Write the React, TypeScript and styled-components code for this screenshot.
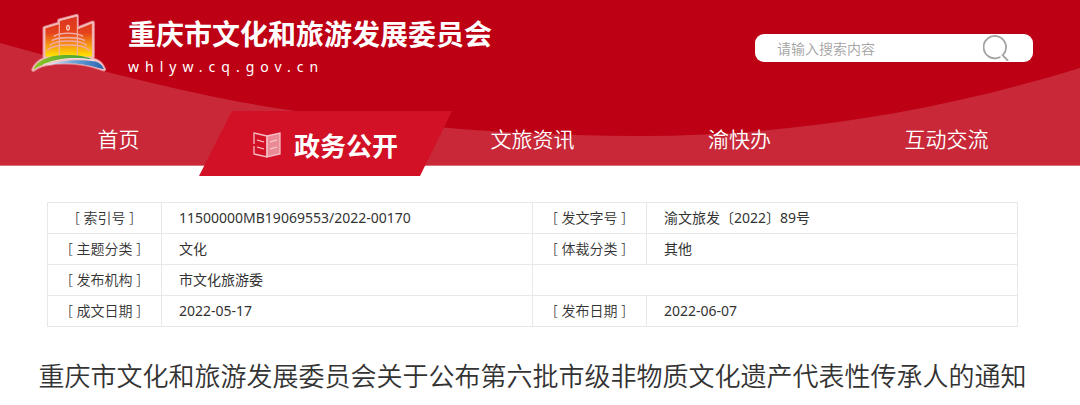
import React from "react";
import styled, { createGlobalStyle } from "styled-components";

const GlobalStyle = createGlobalStyle`
  *, *::before, *::after { box-sizing: border-box; }
  body {
    margin: 0;
    background: #fff;
    color: #333;
    font-family: "Noto Sans", "Noto Sans CJK SC", sans-serif;
    font-size: 14px;
  }
`;

const Header = styled.header`
  position: relative;
  background: #bd0014;
  border-bottom: 1px solid #d8707c;
`;

const Wave = styled.svg`
  position: absolute;
  inset: 0;
  width: 100%;
  height: 100%;
`;

const TopBar = styled.div`
  position: relative;
  display: flex;
  justify-content: space-between;
  align-items: flex-start;
  height: 111px;
  padding: 12px 47px 0 28px;
`;

const Brand = styled.a`
  display: flex;
  gap: 20px;
  color: #fff;
  text-decoration: none;
`;

const BrandText = styled.div`
  display: flex;
  flex-direction: column;
  gap: 5px;
  padding-top: 4px;
`;

const SiteName = styled.span`
  font-size: 28px;
  font-weight: 700;
  line-height: 36px;
  white-space: nowrap;
`;

const SiteHost = styled.span`
  font-size: 14px;
  line-height: 20px;
  letter-spacing: 6px;
`;

const Search = styled.form`
  display: flex;
  align-items: center;
  width: 278px;
  height: 28px;
  margin-top: 22px;
  padding: 0 24px 0 22px;
  border-radius: 9px;
  background: #fff;
`;

const SearchInput = styled.input`
  flex: 1;
  min-width: 0;
  padding: 0;
  border: 0;
  outline: 0;
  background: none;
  color: #333;
  font: inherit;
  font-weight: 350;
  &::placeholder { color: #a3a3a3; opacity: 1; }
`;

const SearchButton = styled.button`
  display: flex;
  padding: 0;
  border: 0;
  background: none;
  cursor: pointer;
`;

const Nav = styled.nav`
  position: relative;
  display: grid;
  grid-template-columns: repeat(5, minmax(0, 1fr));
  height: 54px;
  padding: 0 30px 0 15px;
`;

const NavLink = styled.a<{ $active?: boolean }>`
  display: flex;
  align-items: center;
  justify-content: center;
  gap: 13px;
  color: #fff;
  text-decoration: none;
  white-space: nowrap;
  font-size: ${(p) => (p.$active ? 26 : 21)}px;
  font-weight: ${(p) => (p.$active ? 700 : 350)};
  height: ${(p) => (p.$active ? 65 : 54)}px;
  ${(p) =>
    p.$active &&
    `
    margin: 0 -23px;
    padding-top: 3px;
    background: #d21126;
    clip-path: polygon(33px 0, 100% 0, calc(100% - 32px) 100%, 0 100%);
  `}
`;

const Main = styled.main`
  padding: 36px 15px 0 0;
`;

const TableArea = styled.div`
  padding: 0 47px;
`;

const InfoTable = styled.table`
  width: 100%;
  border-collapse: collapse;
  table-layout: fixed;
`;

const LabelCol = styled.col`
  width: 114px;
`;

const Row = styled.tr`
  height: 31px;
`;

const Label = styled.th`
  padding: 0;
  border: 1px solid #e8e8e8;
  font-weight: 350;
  line-height: 20px;
  text-align: center;
`;

const Value = styled.td`
  padding: 0 17px;
  border: 1px solid #e8e8e8;
  line-height: 20px;
`;

const Title = styled.h1`
  margin: 29px 0 0;
  font-size: 26px;
  font-weight: 350;
  line-height: 40px;
  text-align: center;
`;

const Logo = () => (
  <svg width="80" height="62" viewBox="24 21 240 186" aria-hidden="true">
    <defs>
      <linearGradient id="tower" x1="0" y1="32" x2="0" y2="155" gradientUnits="userSpaceOnUse">
        <stop offset="0" stopColor="#dc3320" />
        <stop offset="0.42" stopColor="#e4431c" />
        <stop offset="0.72" stopColor="#f69a12" />
        <stop offset="1" stopColor="#ffe500" />
      </linearGradient>
      <linearGradient id="green" x1="40" y1="0" x2="220" y2="0" gradientUnits="userSpaceOnUse">
        <stop offset="0" stopColor="#8fc31f" />
        <stop offset="0.5" stopColor="#62b22f" />
        <stop offset="1" stopColor="#3a9d4c" />
      </linearGradient>
      <linearGradient id="blue" x1="80" y1="0" x2="250" y2="0" gradientUnits="userSpaceOnUse">
        <stop offset="0" stopColor="#eef6ff" />
        <stop offset="0.45" stopColor="#71a8dc" />
        <stop offset="1" stopColor="#2564b0" />
      </linearGradient>
    </defs>
    <g stroke="#e0808a" strokeWidth="13" strokeLinejoin="round" fill="#f0a5a9">
      <path d="M74 156V69L118 56V47L170 33V72L218 53V156Z" />
      <path d="M40 194C52 163 94 150 138 150C174 150 198 154 216 163C238 167 246 178 252 193L236 188C190 172 126 168 88 176C68 178 54 184 40 194Z" />
    </g>
    <g stroke="#f6c3c6" strokeWidth="7" strokeLinejoin="round" fill="#f6c3c6">
      <path d="M74 156V69L118 56V47L170 33V72L218 53V156Z" />
      <path d="M40 194C52 163 94 150 138 150C174 150 198 154 216 163C238 167 246 178 252 193L236 188C190 172 126 168 88 176C68 178 54 184 40 194Z" />
    </g>
    <g fill="url(#tower)" stroke="#f3b4ac" strokeWidth="3">
      <path d="M75 156V69L118 56V156Z" />
      <path d="M172 156V72L217 54V156Z" />
      <path d="M118 156V47L172 33V156Z" />
    </g>
    <ellipse cx="144" cy="68" rx="4" ry="7" fill="#e4431c" stroke="#f7c8bd" strokeWidth="4" />
    <g fill="none" stroke="#f3a9a4" strokeWidth="5" strokeLinecap="round">
      <path d="M103 93C118 82 172 82 187 93" />
      <path d="M97 106C113 95 177 95 193 106" />
      <path d="M91 120C108 104 182 104 199 120" />
      <path d="M83 135C103 115 187 115 207 135" />
    </g>
    <path d="M40 194C52 163 94 150 138 150C174 150 198 154 216 163C174 156 121 160 88 173C68 178 54 184 40 194Z" fill="url(#green)" />
    <path d="M80 181C116 165 180 163 220 169C238 171 246 180 252 193L236 189C190 174 126 170 80 181Z" fill="url(#blue)" />
    <path d="M70 179C118 158 174 156 222 167" fill="none" stroke="#f6dfdf" strokeWidth="3" />
  </svg>
);

const BookIcon = () => (
  <svg width="28" height="26" viewBox="0 0 28 26" fill="none" stroke="#f5bdc3" strokeWidth="1.3" aria-hidden="true">
    <path d="M14 4L27 1V22L14 25Z" fill="#e98a95" />
    <path d="M14 4L1 1V12M1 14V22L14 25V4" />
    <path d="M4 8L11 10M4 15L11 17M17 10L24 8M17 17L24 15" stroke="#f9d0d4" />
  </svg>
);

const SearchIcon = () => (
  <svg width="26" height="26" viewBox="0 0 26 26" fill="none" stroke="#a3a3a3" strokeWidth="1.8" strokeLinecap="round" aria-hidden="true">
    <path d="M16.8 22.2A11.2 11.2 0 1 1 20.2 19.6L19.6 20.2L24.6 25.4" />
  </svg>
);

const navItems = ["首页", "政务公开", "文旅资讯", "渝快办", "互动交流"];

const rows = [
  ["索引号", "11500000MB19069553/2022-00170", "发文字号", "渝文旅发〔2022〕89号"],
  ["主题分类", "文化", "体裁分类", "其他"],
  ["发布机构", "市文化旅游委"],
  ["成文日期", "2022-05-17", "发布日期", "2022-06-07"],
];

export default function App() {
  return (
    <>
      <GlobalStyle />
      <Header>
        <Wave viewBox="0 0 1080 165" preserveAspectRatio="none" aria-hidden="true">
          <path
            d="M0 43C80 65 160 87 240 102C360 123 510 136 640 136C800 136 950 108 1080 68V165H0Z"
            fill="#c82838"
          />
        </Wave>
        <TopBar>
          <Brand href="#">
            <Logo />
            <BrandText>
              <SiteName>重庆市文化和旅游发展委员会</SiteName>
              <SiteHost>whlyw.cq.gov.cn</SiteHost>
            </BrandText>
          </Brand>
          <Search onSubmit={(e) => e.preventDefault()}>
            <SearchInput type="text" aria-label="搜索" placeholder="请输入搜索内容" />
            <SearchButton type="submit" aria-label="搜索">
              <SearchIcon />
            </SearchButton>
          </Search>
        </TopBar>
        <Nav>
          {navItems.map((name, i) => (
            <NavLink key={name} href="#" $active={i === 1}>
              {i === 1 && <BookIcon />}
              {name}
            </NavLink>
          ))}
        </Nav>
      </Header>
      <Main>
        <TableArea>
          <InfoTable>
            <colgroup>
              <LabelCol />
              <col />
              <LabelCol />
              <col />
            </colgroup>
            <tbody>
              {rows.map(([label, value, label2, value2]) => (
                <Row key={label}>
                  <Label scope="row">[ {label} ]</Label>
                  <Value>{value}</Value>
                  {label2 ? (
                    <>
                      <Label scope="row">[ {label2} ]</Label>
                      <Value>{value2}</Value>
                    </>
                  ) : (
                    <Value colSpan={2} />
                  )}
                </Row>
              ))}
            </tbody>
          </InfoTable>
        </TableArea>
        <Title>重庆市文化和旅游发展委员会关于公布第六批市级非物质文化遗产代表性传承人的通知</Title>
      </Main>
    </>
  );
}
